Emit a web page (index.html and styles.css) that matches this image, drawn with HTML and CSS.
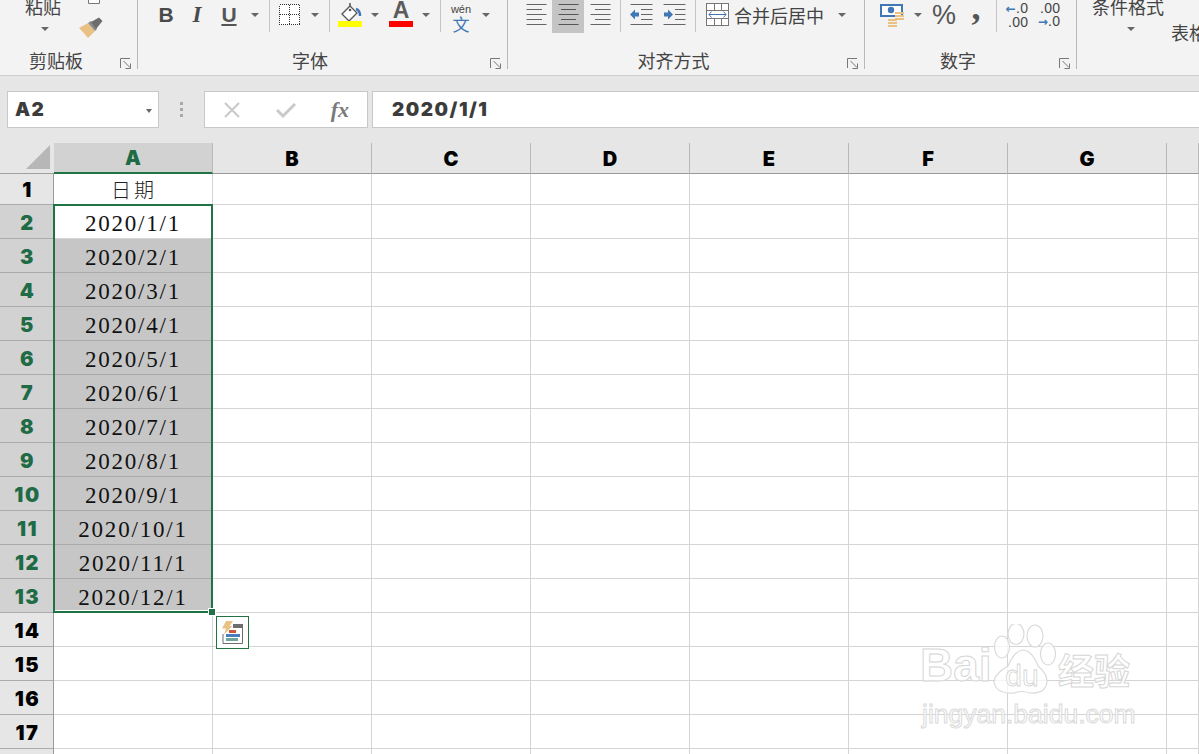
FILE: index.html
```html
<!DOCTYPE html>
<html lang="zh">
<head>
<meta charset="utf-8">
<title>Excel</title>
<link rel="stylesheet" href="styles.css">
</head>
<body>
<div class="app">
  <header class="ribbon">
    <section class="group g-clip">
      <div class="clip-tools">
        <div class="paste"><span class="cjk-btn">粘贴</span><i class="caret"></i></div>
        <div class="clip-side">
          <svg class="mini-copy" width="14" height="5" viewBox="0 0 14 5"><path d="M1.500 0V3.500H12.500V0" fill="#fff" stroke="#777"/></svg>
          <svg width="26" height="24" viewBox="0 0 26 24"><path d="M1 11 L10 6 L17 14 L10 21 Q6 16 1 11Z" fill="#e9c184"/><path d="M10 6 L13 4 L19 12 L17 14Z" fill="#8a8a8a"/><path d="M13 5 L21 0.500 L24.500 4 L18 12Z" fill="#6d6d6d"/></svg>
        </div>
      </div>
      <div class="label-row"><span class="label">剪贴板</span><span class="launch"><svg width="12" height="11" viewBox="0 0 12 11"><path d="M.5 10V.5H10M3.500 3 L10 9.500M10.500 5.500V10.500H5.500" fill="none" stroke="#777"/></svg></span></div>
    </section>

    <section class="group g-font">
      <div class="tools t-font">
        <b class="fmt fmt-b">B</b>
        <i class="fmt fmt-i">I</i>
        <u class="fmt fmt-u">U</u>
        <i class="caret"></i>
        <i class="sep"></i>
        <svg width="22" height="33" viewBox="0 0 22 33" shape-rendering="crispEdges"><path d="M1.500 4.500H21.500V24.500H1.500ZM11.500 4.500V24.500M1.500 14.500H21.500" fill="#fff" stroke="#333" stroke-dasharray="1 1"/></svg>
        <i class="caret"></i>
        <i class="sep"></i>
        <svg width="26" height="33" viewBox="0 0 26 33"><path d="M5 14 L13 6 L20 13 L12 21Z" fill="#fff" stroke="#555" stroke-width="1.300"/><path d="M13 6V3" stroke="#555" stroke-width="1.500"/><circle cx="13" cy="10" r="1.300" fill="#555"/><path d="M19 9Q23 10 23 16" fill="none" stroke="#3f78b5" stroke-width="2.500"/><rect x="1" y="21" width="24" height="6" fill="#ffff00"/></svg>
        <i class="caret"></i>
        <div class="color-a"><span>A</span><i class="bar-red"></i></div>
        <i class="caret"></i>
        <i class="sep"></i>
        <div class="wen"><span class="wen-top">wén</span><span class="wen-zh">文</span></div>
        <i class="caret"></i>
      </div>
      <div class="label-row"><span class="label">字体</span><span class="launch"><svg width="12" height="11" viewBox="0 0 12 11"><path d="M.5 10V.5H10M3.500 3 L10 9.500M10.500 5.500V10.500H5.500" fill="none" stroke="#777"/></svg></span></div>
    </section>

    <section class="group g-align">
      <div class="tools t-align">
        <svg width="21" height="33" viewBox="0 0 21 33"><path d="M.5 4.500H20.500M.5 9.500H16M.5 14.500H20.500M.5 19.500H16M.5 24.500H20.500" stroke="#666"/></svg>
        <div class="active-cell"><svg width="21" height="33" viewBox="0 0 21 33"><path d="M.5 4.500H20.500M3 9.500H18M.5 14.500H20.500M3 19.500H18M.5 24.500H20.500" stroke="#555"/></svg></div>
        <svg width="21" height="33" viewBox="0 0 21 33"><path d="M.5 4.500H20.500M5 9.500H20.500M.5 14.500H20.500M5 19.500H20.500M.5 24.500H20.500" stroke="#666"/></svg>
        <i class="sep"></i>
        <svg width="23" height="33" viewBox="0 0 23 33"><path d="M.5 4.500H22.500M11 9.500H22.500M11 14.500H22.500M11 19.500H22.500M.5 24.500H22.500" stroke="#666"/><path d="M0 14.500 L5 9.500V12.500H9V16.500H5V19.500Z" fill="#3f78b5"/></svg>
        <svg width="23" height="33" viewBox="0 0 23 33"><path d="M.5 4.500H22.500M12 9.500H22.500M12 14.500H22.500M12 19.500H22.500M.5 24.500H22.500" stroke="#666"/><path d="M10 14.500 L5 9.500V12.500H1V16.500H5V19.500Z" fill="#3f78b5"/></svg>
        <i class="sep"></i>
        <svg width="23" height="33" viewBox="0 0 23 33" shape-rendering="crispEdges"><path d="M.5 3.500H22.500V25.500H.5ZM.5 10.500H22.500M.5 18.500H22.500M8.500 3.500V10.500M15.500 3.500V10.500M8.500 18.500V25.500M15.500 18.500V25.500M.5 10.500V18.500M22.500 10.500V18.500" fill="#fff" stroke="#777"/><path d="M3 14H20V15H3Z" fill="#3f78b5"/><path d="M5.500 11.500 L3 14.500 L5.500 17.500M17.500 11.500 L20 14.500 L17.500 17.500" fill="none" stroke="#3f78b5" shape-rendering="auto"/></svg>
        <span class="merge-text">合并后居中</span>
        <i class="caret"></i>
      </div>
      <div class="label-row"><span class="label">对齐方式</span><span class="launch"><svg width="12" height="11" viewBox="0 0 12 11"><path d="M.5 10V.5H10M3.500 3 L10 9.500M10.500 5.500V10.500H5.500" fill="none" stroke="#777"/></svg></span></div>
    </section>

    <section class="group g-num">
      <div class="tools t-num">
        <svg width="24" height="33" viewBox="0 0 24 33"><rect x="1" y="5" width="21" height="11" fill="#fff" stroke="#3f78b5" stroke-width="2"/><circle cx="11" cy="10" r="3.200" fill="#3f78b5"/><path d="M15 13H24M15 16H24M15 19H24" stroke="#e9c184" stroke-width="2"/><path d="M8 20H17M8 23H17M8 26H17" stroke="#e9c184" stroke-width="2"/></svg>
        <i class="caret"></i>
        <span class="percent">%</span>
        <span class="comma">,</span>
        <i class="sep"></i>
        <div class="dec"><span><em>←</em>.0</span><span>.00</span></div>
        <div class="dec"><span>.00</span><span><em>→</em>.0</span></div>
      </div>
      <div class="label-row"><span class="label">数字</span><span class="launch"><svg width="12" height="11" viewBox="0 0 12 11"><path d="M.5 10V.5H10M3.500 3 L10 9.500M10.500 5.500V10.500H5.500" fill="none" stroke="#777"/></svg></span></div>
    </section>

    <section class="g-style">
      <div class="style-a"><span class="cjk-btn">条件格式</span><i class="caret"></i></div>
      <div class="style-b"><span class="cjk-btn">表格格式</span></div>
    </section>
  </header>

  <div class="formula">
    <div class="namebox"><span class="heavy">A2</span><i class="caret"></i></div>
    <div class="grip"><i></i><i></i><i></i></div>
    <div class="fx-box">
      <svg width="18" height="18" viewBox="0 0 18 18"><path d="M2 2 L16 16M16 2 L2 16" stroke="#c9c9c9" stroke-width="2"/></svg>
      <svg width="20" height="18" viewBox="0 0 20 18"><path d="M1 9 L7 15 L19 3" fill="none" stroke="#c9c9c9" stroke-width="3"/></svg>
      <span class="fx">fx</span>
    </div>
    <div class="input"><span class="heavy">2020/1/1</span></div>
  </div>

  <main class="sheet">
    <div class="row head">
      <div class="corner"><svg width="24" height="24" viewBox="0 0 24 24"><path d="M24 0V24H0Z" fill="#b7b7b7"/></svg></div>
      <div class="ch on">A</div><div class="ch">B</div><div class="ch">C</div><div class="ch">D</div><div class="ch">E</div><div class="ch">F</div><div class="ch">G</div><div class="ch"></div>
    </div>
    <div class="row r-first"><div class="rh">1</div><div class="c title">日期</div><div class="c"></div><div class="c"></div><div class="c"></div><div class="c"></div><div class="c"></div><div class="c"></div><div class="c"></div></div>
    <div class="row"><div class="rh on">2</div><div class="c date active">2020/1/1</div><div class="c"></div><div class="c"></div><div class="c"></div><div class="c"></div><div class="c"></div><div class="c"></div><div class="c"></div></div>
    <div class="row"><div class="rh on">3</div><div class="c date sel">2020/2/1</div><div class="c"></div><div class="c"></div><div class="c"></div><div class="c"></div><div class="c"></div><div class="c"></div><div class="c"></div></div>
    <div class="row"><div class="rh on">4</div><div class="c date sel">2020/3/1</div><div class="c"></div><div class="c"></div><div class="c"></div><div class="c"></div><div class="c"></div><div class="c"></div><div class="c"></div></div>
    <div class="row"><div class="rh on">5</div><div class="c date sel">2020/4/1</div><div class="c"></div><div class="c"></div><div class="c"></div><div class="c"></div><div class="c"></div><div class="c"></div><div class="c"></div></div>
    <div class="row"><div class="rh on">6</div><div class="c date sel">2020/5/1</div><div class="c"></div><div class="c"></div><div class="c"></div><div class="c"></div><div class="c"></div><div class="c"></div><div class="c"></div></div>
    <div class="row"><div class="rh on">7</div><div class="c date sel">2020/6/1</div><div class="c"></div><div class="c"></div><div class="c"></div><div class="c"></div><div class="c"></div><div class="c"></div><div class="c"></div></div>
    <div class="row"><div class="rh on">8</div><div class="c date sel">2020/7/1</div><div class="c"></div><div class="c"></div><div class="c"></div><div class="c"></div><div class="c"></div><div class="c"></div><div class="c"></div></div>
    <div class="row"><div class="rh on">9</div><div class="c date sel">2020/8/1</div><div class="c"></div><div class="c"></div><div class="c"></div><div class="c"></div><div class="c"></div><div class="c"></div><div class="c"></div></div>
    <div class="row"><div class="rh on">10</div><div class="c date sel">2020/9/1</div><div class="c"></div><div class="c"></div><div class="c"></div><div class="c"></div><div class="c"></div><div class="c"></div><div class="c"></div></div>
    <div class="row"><div class="rh on">11</div><div class="c date sel">2020/10/1</div><div class="c"></div><div class="c"></div><div class="c"></div><div class="c"></div><div class="c"></div><div class="c"></div><div class="c"></div></div>
    <div class="row"><div class="rh on">12</div><div class="c date sel">2020/11/1</div><div class="c"></div><div class="c"></div><div class="c"></div><div class="c"></div><div class="c"></div><div class="c"></div><div class="c"></div></div>
    <div class="row"><div class="rh on">13</div><div class="c date sel">2020/12/1</div><div class="c"></div><div class="c"></div><div class="c"></div><div class="c"></div><div class="c"></div><div class="c"></div><div class="c"></div></div>
    <div class="row"><div class="rh">14</div><div class="c"></div><div class="c"></div><div class="c"></div><div class="c"></div><div class="c"></div><div class="c"></div><div class="c"></div><div class="c"></div></div>
    <div class="row"><div class="rh">15</div><div class="c"></div><div class="c"></div><div class="c"></div><div class="c"></div><div class="c"></div><div class="c"></div><div class="c"></div><div class="c"></div></div>
    <div class="row"><div class="rh">16</div><div class="c"></div><div class="c"></div><div class="c"></div><div class="c"></div><div class="c"></div><div class="c"></div><div class="c"></div><div class="c"></div></div>
    <div class="row"><div class="rh">17</div><div class="c"></div><div class="c"></div><div class="c"></div><div class="c"></div><div class="c"></div><div class="c"></div><div class="c"></div><div class="c"></div></div>
    <div class="row"><div class="rh"></div><div class="c"></div><div class="c"></div><div class="c"></div><div class="c"></div><div class="c"></div><div class="c"></div><div class="c"></div><div class="c"></div></div>

    <div class="selection"><i class="handle"></i></div>
    <div class="paste-opt">
      <svg width="24" height="24" viewBox="0 0 24 24"><path d="M2 13V22.500H21.500V5" fill="none" stroke="#6d6d6d"/><rect x="12" y="3" width="10" height="4" fill="#6d6d6d"/><rect x="8" y="9" width="7" height="3" fill="#d0583a"/><rect x="5" y="13" width="14" height="3" fill="#4a7ebb"/><rect x="5" y="17" width="12" height="3" fill="#6fa59a"/><path d="M5 0H12L8.500 5H11.500L3 13.500 L5 7.500H1Z" fill="#e9c184"/></svg>
    </div>
    <div class="watermark">
      <div class="wm-top">
        <span class="wm-bai">Bai</span>
        <svg class="wm-paw" width="66" height="72" viewBox="0 0 66 72"><g fill="#fff" fill-opacity=".75" stroke="#dadada" stroke-width="1.200"><ellipse cx="10" cy="23" rx="7.500" ry="11"/><ellipse cx="24" cy="10" rx="8" ry="10.500"/><ellipse cx="43" cy="12" rx="8" ry="11"/><ellipse cx="56" cy="30" rx="7.500" ry="11"/><path d="M30 26Q40 26 46 42Q58 52 54 62Q50 70 38 69Q30 66 22 69Q4 70 2 58Q2 50 16 42Q22 28 30 26Z"/></g><text class="wm-du" x="30" y="62" text-anchor="middle">du</text></svg>
        <span class="wm-zh">经验</span>
      </div>
      <div class="wm-url">jingyan.baidu.com</div>
    </div>
  </main>
</div>
</body>
</html>
```
FILE: styles.css
```css
* { box-sizing: border-box; }
html, body { margin: 0; padding: 0; height: 100%; overflow: hidden; background: #fff; }
.app { width: 1199px; height: 754px; display: flex; flex-direction: column; overflow: hidden; font-family: "Noto Sans CJK SC", "Liberation Sans", sans-serif; color: #444; }

/* ribbon */
.ribbon { height: 76px; flex: none; display: flex; background: #f3f3f3; border-bottom: 1px solid #cfcfcf; padding-bottom: 6px; overflow: hidden; }
.group { display: flex; flex-direction: column; justify-content: space-between; flex: none; border-right: 1px solid #b8b8b8; }
.g-clip { width: 138px; }
.g-font { width: 370px; }
.g-align { width: 357px; }
.g-num { width: 212px; }
.g-style { flex: 1; display: flex; align-items: flex-start; min-width: 0; overflow: hidden; }

.tools { display: grid; height: 33px; align-items: center; justify-items: center; }
.t-font { padding-left: 13px; grid-template-columns: 30px 32px 32px 20px 8px 32px 20px 8px 34px 16px 36px 14px 14px 28px 22px; }
.t-align { padding-left: 12px; grid-template-columns: 32px 32px 32px 8px 34px 32px 10px 34px 96px 24px; }
.t-num { padding-left: 10px; grid-template-columns: 34px 18px 34px 30px 10px 32px 32px; }
.tools svg { display: block; }

.caret { display: block; width: 0; height: 0; border-left: 4px solid transparent; border-right: 4px solid transparent; border-top: 4px solid #666; margin-bottom: 3px; }
.sep { display: block; width: 1px; height: 32px; align-self: start; background: #c6c6c6; }

.label-row { display: flex; height: 18px; align-items: center; }
.label { flex: 1; text-align: center; font-size: 18px; line-height: 18px; color: #444; }
.launch { flex: none; width: 25px; display: flex; justify-content: flex-start; padding-top: 6px; padding-left: 8px; }
.launch svg { display: block; }

.cjk-btn { font-size: 18px; line-height: 18px; color: #444; white-space: nowrap; }
.clip-tools { display: flex; height: 51px; }
.paste { width: 78px; padding-left: 25px; display: flex; flex-direction: column; align-items: flex-start; margin-top: -3px; }
.paste .caret { margin: 12px 0 0 16px; }
.clip-side { display: flex; flex-direction: column; }
.mini-copy { margin: 0 0 12px 9px; display: block; }

.fmt { font-family: "Liberation Sans", sans-serif; font-size: 21px; line-height: 24px; color: #4a4a4a; margin-bottom: 4px; }
.fmt-b { font-weight: 700; }
.fmt-i { font-family: "Liberation Serif", serif; font-weight: 700; font-size: 23px; }
.fmt-u { font-weight: 700; color: #555; }
.color-a { display: flex; flex-direction: column; align-items: center; width: 24px; height: 33px; }
.color-a span { font-family: "Liberation Sans", sans-serif; font-weight: 700; font-size: 23px; line-height: 21px; color: #5c5c5c; }
.bar-red { display: block; width: 24px; height: 6px; background: #ff0000; }
.wen { display: flex; flex-direction: column; align-items: center; height: 33px; }
.wen-top { font-family: "Liberation Sans", sans-serif; font-size: 11px; line-height: 11px; margin-top: 4px; color: #444; }
.wen-zh { font-size: 17px; line-height: 17px; color: #3f78b5; }
.active-cell { width: 32px; height: 33px; background: #c4c4c4; display: flex; justify-content: center; }
.merge-text { font-size: 18px; line-height: 24px; color: #444; white-space: nowrap; justify-self: start; margin-bottom: 3px; }
.percent { font-family: "Liberation Sans", sans-serif; font-size: 27px; line-height: 30px; height: 30px; color: #555; margin-bottom: 3px; align-self: start; }
.comma { font-family: "Liberation Serif", serif; font-weight: 700; font-size: 36px; line-height: 30px; height: 30px; color: #555; align-self: start; margin-top: -8px; overflow: visible; }
.dec { display: flex; flex-direction: column; align-items: flex-end; font-family: "Liberation Sans", sans-serif; font-size: 14px; line-height: 13px; color: #444; align-self: start; padding-top: 2px; letter-spacing: .3px; }
.dec em { font-family: "DejaVu Sans", sans-serif; font-size: 12px; font-style: normal; font-weight: 700; color: #3f78b5; }

.style-a { width: 72px; margin-left: 15px; margin-top: -3px; display: flex; flex-direction: column; align-items: center; flex: none; }
.style-a .caret { margin: 12px 0 0 6px; }
.style-b { margin-left: 7px; margin-top: 21px; flex: none; width: 40px; overflow: hidden; }

/* formula bar */
.formula { height: 67px; flex: none; display: flex; align-items: flex-start; background: #e6e6e6; padding: 15px 0 0 7px; }
.namebox { width: 152px; height: 37px; background: #fff; border: 1px solid #c8c8c8; display: flex; align-items: center; justify-content: space-between; padding: 0 6px 0 7px; }
.namebox .caret { margin: 2px 0 0; border-left-width: 3.500px; border-right-width: 3.500px; }
.heavy { font-family: Inter, "Liberation Sans", sans-serif; font-weight: 900; color: #3c3c3c; font-size: 19px; letter-spacing: 1.500px; line-height: 24px; }
.grip { width: 45px; display: flex; flex-direction: column; align-items: center; gap: 3px; padding-top: 11px; }
.grip i { display: block; width: 3px; height: 3px; background: #a9a9a9; }
.fx-box { width: 164px; height: 37px; background: #fff; border: 1px solid #c8c8c8; display: flex; align-items: center; justify-content: space-between; padding: 0 18px 0 18px; }
.fx { font-family: "Liberation Serif", serif; font-style: italic; font-weight: 700; font-size: 22px; line-height: 24px; color: #7a7a7a; }
.input { flex: 1; height: 37px; margin-left: 4px; background: #fff; border: 1px solid #c8c8c8; border-right: 0; display: flex; align-items: center; padding-left: 19px; }

/* sheet */
.sheet { position: relative; flex: 1; background: #fff; overflow: hidden; min-height: 0; }
.row { display: grid; grid-template-columns: 54px repeat(7, 159px) 32px; height: 34px; }
.head { height: 31px; background: #e6e6e6; }
.r-first { height: 31px; }
.corner { display: flex; justify-content: flex-end; align-items: flex-end; padding: 0 4px 4px 0; border-bottom: 1px solid #a0a0a0; }
.ch { display: flex; align-items: center; justify-content: center; padding-top: 1px; border-right: 1px solid #b9b9b9; border-bottom: 1px solid #9a9a9a; font-family: Inter, sans-serif; font-weight: 900; font-size: 20px; color: #000; }
.ch.on { background: #d2d2d2; color: #1f6b45; border-bottom: 2px solid #217346; }
.rh { display: flex; align-items: center; justify-content: center; padding: 3px 0 0 2px; background: #e6e6e6; border-right: 1px solid #9a9a9a; border-bottom: 1px solid #ababab; font-family: Inter, sans-serif; font-weight: 900; font-size: 20px; letter-spacing: 1.500px; color: #000; }
.r-first .rh { padding-top: 1px; }
.rh.on { background: #d2d2d2; color: #1f6b45; }
.c { border-right: 1px solid #d4d4d4; border-bottom: 1px solid #d4d4d4; display: flex; align-items: center; justify-content: center; min-width: 0; }
.date { font-family: "Liberation Serif", serif; font-size: 23px; letter-spacing: 1.800px; padding-top: 4px; color: #111; }
.title { font-family: "Noto Sans CJK SC", sans-serif; font-weight: 300; font-size: 20px; letter-spacing: 3px; padding-left: 2px; color: #222; }
.active { background: #fff; }
.sel { background: #c6c6c6; border-bottom-color: #aaa; }

.selection { position: absolute; left: 53px; top: 61px; width: 160px; height: 409px; border: 2px solid #217346; box-shadow: inset 0 -1px 0 #fff, inset 0 1px 0 #fff; }
.handle { position: absolute; right: -5px; bottom: -5px; width: 8px; height: 8px; background: #217346; border: 1px solid #fff; display: block; }
.paste-opt { position: absolute; left: 216px; top: 473px; width: 33px; height: 33px; background: #fff; border: 1px solid #217346; display: flex; align-items: center; justify-content: center; }
.paste-opt svg { display: block; }

.watermark { position: absolute; left: 920px; top: 480px; width: 220px; display: flex; flex-direction: column; }
.wm-top { display: flex; align-items: flex-end; height: 76px; }
.wm-bai { font-family: "Liberation Sans", sans-serif; font-weight: 700; font-size: 46px; line-height: 50px; color: rgba(255,255,255,.8); -webkit-text-stroke: 1px #d6d6d6; width: 72px; margin-bottom: 9px; }
.wm-paw { display: block; flex: none; margin-bottom: 3px; }
.wm-du { font-family: "Liberation Sans", sans-serif; font-size: 30px; fill: #fff; stroke: #d4d4d4; stroke-width: .8px; }
.wm-zh { font-family: "Noto Sans CJK SC", sans-serif; font-weight: 700; font-size: 36px; line-height: 44px; color: rgba(255,255,255,.85); -webkit-text-stroke: 1px #d6d6d6; margin-bottom: 8px; white-space: nowrap; }
.wm-url { font-family: "Liberation Sans", sans-serif; font-size: 26.500px; line-height: 30px; color: rgba(255,255,255,.8); -webkit-text-stroke: 1px #dadada; white-space: nowrap; margin-left: 2px; }
```
